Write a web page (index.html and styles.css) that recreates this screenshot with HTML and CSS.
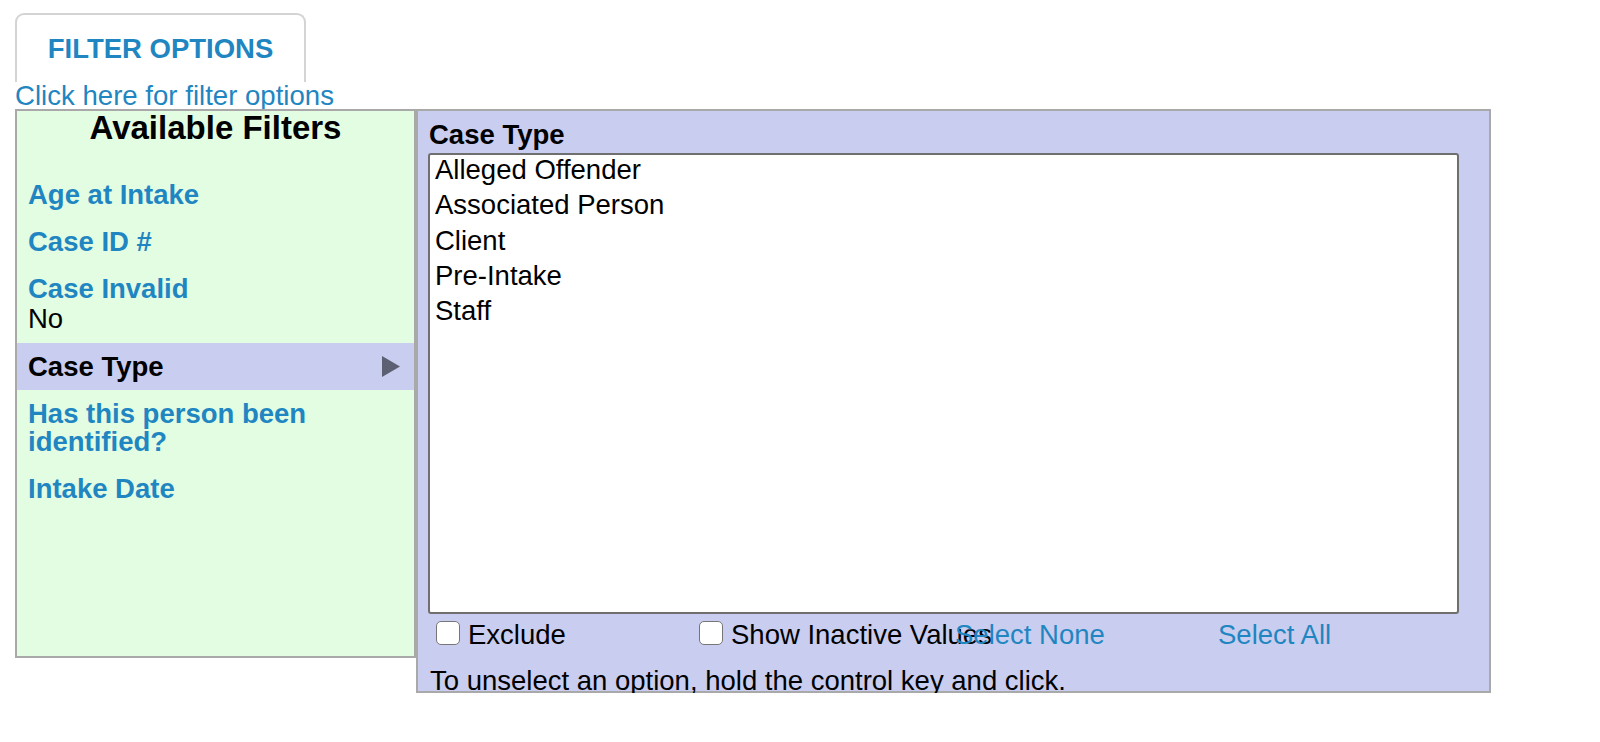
FILE: index.html
```html
<!DOCTYPE html>
<html lang="en">
<head>
<meta charset="utf-8">
<title>Filter Options</title>
<link rel="stylesheet" href="styles.css">
</head>
<body>
<div class="page">
  <div class="tab"><span class="tab-label">FILTER OPTIONS</span></div>
  <a class="toggle-link" href="#">Click here for filter options</a>
  <div class="filters">
    <div class="filter-list">
      <div class="list-title">Available Filters</div>
      <div class="filter-item"><div class="filter-text"><span class="filter-name">Age at Intake</span></div></div>
      <div class="filter-item"><div class="filter-text"><span class="filter-name">Case ID #</span></div></div>
      <div class="filter-item"><div class="filter-text"><span class="filter-name">Case Invalid</span><span class="filter-value">No</span></div></div>
      <div class="filter-item active">
        <div class="filter-text"><span class="filter-name">Case Type</span></div>
        <svg class="arrow" width="18" height="21" viewBox="0 0 18 21"><polygon points="0,0 18,10.5 0,21" fill="#5d6072"/></svg>
      </div>
      <div class="filter-item tall"><div class="filter-text"><span class="filter-name">Has this person been identified?</span></div></div>
      <div class="filter-item"><div class="filter-text"><span class="filter-name">Intake Date</span></div></div>
    </div>
    <div class="filter-detail">
      <div class="detail-title">Case Type</div>
      <div class="listbox">
        <div class="option">Alleged Offender</div>
        <div class="option">Associated Person</div>
        <div class="option">Client</div>
        <div class="option">Pre-Intake</div>
        <div class="option">Staff</div>
      </div>
      <div class="controls">
        <label class="check"><input type="checkbox" class="box"><span>Exclude</span></label>
        <label class="check"><input type="checkbox" class="box"><span>Show Inactive Values</span></label>
        <a class="action" href="#">Select None</a>
        <a class="action" href="#">Select All</a>
      </div>
      <div class="hint">To unselect an option, hold the control key and click.</div>
    </div>
  </div>
</div>
</body>
</html>
```
FILE: styles.css
```css
body {
  margin: 0;
  background: #ffffff;
  color: #000000;
  font-family: "Liberation Sans", Arial, Helvetica, sans-serif;
}

.page {
  padding: 13px 0 0 15px;
}

.tab {
  width: 291px;
  height: 69px;
  box-sizing: border-box;
  border: 2px solid #d4d4d4;
  border-bottom: none;
  border-radius: 9px 9px 0 0;
  padding-top: 19.5px;
  text-align: center;
}

.tab-label {
  font-size: 27.5px;
  font-weight: 700;
  line-height: 28px;
  color: #1f86c1;
}

.toggle-link {
  display: block;
  width: max-content;
  margin-top: 1px;
  font-size: 27.6px;
  line-height: 26px;
  color: #1f86c1;
  text-decoration: none;
}

.filters {
  display: flex;
  align-items: flex-start;
}

.filter-list {
  width: 401px;
  height: 549px;
  box-sizing: border-box;
  border: 2px solid #a9a9a9;
  background: #e3fde3;
}

.list-title {
  font-size: 33px;
  font-weight: 700;
  line-height: 33px;
  text-align: center;
  margin-bottom: 27px;
}

.filter-item {
  display: flex;
  align-items: center;
  justify-content: space-between;
  padding: 10px 14px 10px 11px;
  font-size: 27.5px;
  line-height: 27px;
}

.filter-item.tall {
  line-height: 27.5px;
}

.filter-text {
  display: flex;
  flex-direction: column;
}

.filter-name {
  font-weight: 700;
  color: #1f86c1;
}

.filter-value {
  font-weight: 400;
  color: #000000;
  line-height: 28px;
  padding-top: 3px;
}

.filter-item.active {
  background: #c9cdef;
}

.filter-item.active .filter-name {
  color: #000000;
}

.arrow {
  flex-shrink: 0;
  display: block;
}

.filter-detail {
  width: 1075px;
  height: 584px;
  box-sizing: border-box;
  border: 2px solid #a9a9a9;
  background: #c9cdef;
  padding: 9.5px 0 0 10px;
}

.detail-title {
  font-size: 27.5px;
  font-weight: 700;
  line-height: 28px;
  padding-left: 1px;
}

.listbox {
  margin-top: 4.5px;
  width: 1031px;
  height: 461px;
  box-sizing: border-box;
  border: 2px solid #6f6f6f;
  border-radius: 3px;
  background: #ffffff;
}

.option {
  font-size: 27.5px;
  line-height: 30px;
  padding: 0 0 5.25px 5px;
}

.controls {
  display: grid;
  grid-template-columns: 263px 256px 263px auto;
  margin-top: 7px;
  padding-left: 8px;
  font-size: 27.5px;
  line-height: 28px;
}

.check {
  display: flex;
  align-items: flex-start;
  gap: 8px;
  white-space: nowrap;
}

.box {
  appearance: none;
  -webkit-appearance: none;
  flex-shrink: 0;
  width: 24px;
  height: 24px;
  margin: 0;
  box-sizing: border-box;
  border: 1.5px solid #767676;
  border-radius: 5px;
  background: #ffffff;
}

.action {
  color: #1f86c1;
  text-decoration: none;
  white-space: nowrap;
}

.hint {
  margin-top: 17.5px;
  padding-left: 2px;
  font-size: 27.5px;
  line-height: 28px;
  white-space: nowrap;
}
```
